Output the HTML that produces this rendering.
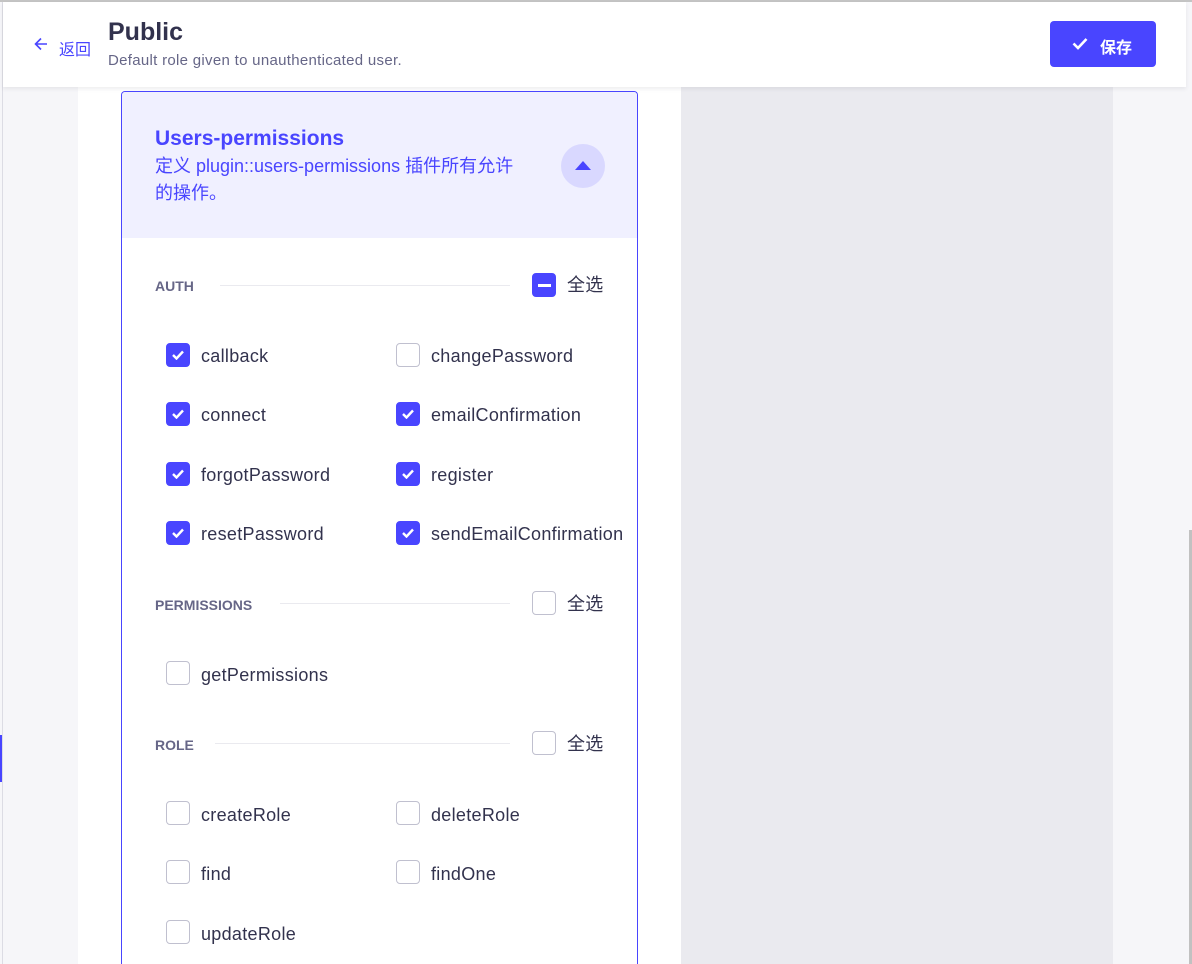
<!DOCTYPE html>
<html><head><meta charset="utf-8"><style>
*{margin:0;padding:0;box-sizing:border-box}
html,body{width:1192px;height:964px;overflow:hidden}
body{background:#f6f6f9;position:relative;font-family:"Liberation Sans","Noto Sans CJK SC",sans-serif;color:#32324d}
.a{position:absolute}
.cb{position:absolute;width:24px;height:24px;border-radius:4px;border:1px solid #c0c0cf;background:#fff}
.cb.on{background:#4945ff;border-color:#4945ff}
.cb.on svg{position:absolute;left:5px;top:6px}
.lb{position:absolute;font-size:18px;color:#32324d;line-height:24px;white-space:nowrap;letter-spacing:0.3px}
.sec{position:absolute;font-size:14px;font-weight:bold;color:#666687;line-height:16px}
.ln{position:absolute;height:1px;background:#eaeaef}
</style></head><body>
<div class="a" style="left:0;top:0;width:1192px;height:2px;background:#c4c4c4"></div>
<div class="a" style="left:2px;top:2px;width:1px;height:962px;background:#dcdce4"></div>
<div class="a" style="left:0;top:735px;width:2px;height:47px;background:#4945ff"></div>
<div class="a" style="left:78px;top:87px;width:603px;height:877px;background:#fff"></div>
<div class="a" style="left:681px;top:87px;width:432px;height:877px;background:#eaeaef"></div>
<div class="a" style="left:1189px;top:530px;width:3px;height:434px;background:#c1c1c1"></div>
<div class="a" style="left:3px;top:2px;width:1183px;height:85px;background:#fff;box-shadow:0 2px 4px rgba(33,33,52,.08)"></div>
<svg class="a" style="left:34px;top:37px" width="14" height="14" viewBox="0 0 14 14"><path d="M13 7H2M7 1.5L1.5 7L7 12.5" stroke="#4945ff" stroke-width="1.6" fill="none"/></svg>
<div class="a" style="left:59px;top:36px;font-size:16px;color:#4945ff">返回</div>
<div class="a" style="left:108px;top:18px;font-size:25px;font-weight:bold;color:#32324d">Public</div>
<div class="a" style="left:108px;top:52px;font-size:15px;color:#666687;letter-spacing:0.3px">Default role given to unauthenticated user.</div>
<div class="a" style="left:1050px;top:21px;width:106px;height:46px;background:#4945ff;border-radius:4px;color:#fff;font-size:16px;font-weight:bold">
<svg class="a" style="left:22px;top:16px" width="16" height="13" viewBox="0 0 16 13"><path d="M1.5 6.5L6 11L14.5 2" stroke="#fff" stroke-width="2.6" fill="none"/></svg>
<span class="a" style="left:50px;top:13px">保存</span></div>
<div class="a" style="left:121px;top:91px;width:517px;height:873px;border:1px solid #4945ff;border-bottom:none;border-radius:4px 4px 0 0;background:#fff;overflow:hidden">
<div class="a" style="left:0;top:0;width:515px;height:146px;background:#f0f0ff"></div>
</div>
<div class="a" style="left:155px;top:127px;font-size:21px;font-weight:bold;color:#4945ff">Users-permissions</div>
<div class="a" style="left:155px;top:153px;width:380px;font-size:18px;line-height:27px;color:#4945ff">定义 plugin::users-permissions 插件所有允许<br>的操作。</div>
<div class="a" style="left:561px;top:144px;width:44px;height:44px;border-radius:50%;background:#d9d8ff"></div>
<svg class="a" style="left:575px;top:160px" width="16" height="10" viewBox="0 0 16 10"><path d="M0 10L8 1L16 10Z" fill="#4945ff"/></svg>

<div class="sec" style="left:155px;top:278px">AUTH</div><div class="ln" style="left:220px;top:285px;width:290px"></div>
<div class="cb on" style="left:532px;top:273px"><span class="a" style="left:5px;top:10px;width:13px;height:3px;background:#fff"></span></div><div class="lb" style="left:567px;top:273px">全选</div>
<div class="sec" style="left:155px;top:597px">PERMISSIONS</div><div class="ln" style="left:280px;top:603px;width:230px"></div>
<div class="cb" style="left:532px;top:591px"></div><div class="lb" style="left:567px;top:592px">全选</div>
<div class="sec" style="left:155px;top:737px">ROLE</div><div class="ln" style="left:215px;top:743px;width:295px"></div>
<div class="cb" style="left:532px;top:731px"></div><div class="lb" style="left:567px;top:732px">全选</div>

<div class="cb on" style="left:166px;top:343px"><svg width="12" height="10" viewBox="0 0 12 10"><path d="M1 5L4.5 8.5L11 1.5" stroke="#fff" stroke-width="2.4" fill="none"/></svg></div><div class="lb" style="left:201px;top:344px">callback</div>
<div class="cb" style="left:396px;top:343px"></div><div class="lb" style="left:431px;top:344px">changePassword</div>
<div class="cb on" style="left:166px;top:402px"><svg width="12" height="10" viewBox="0 0 12 10"><path d="M1 5L4.5 8.5L11 1.5" stroke="#fff" stroke-width="2.4" fill="none"/></svg></div><div class="lb" style="left:201px;top:403px">connect</div>
<div class="cb on" style="left:396px;top:402px"><svg width="12" height="10" viewBox="0 0 12 10"><path d="M1 5L4.5 8.5L11 1.5" stroke="#fff" stroke-width="2.4" fill="none"/></svg></div><div class="lb" style="left:431px;top:403px">emailConfirmation</div>
<div class="cb on" style="left:166px;top:462px"><svg width="12" height="10" viewBox="0 0 12 10"><path d="M1 5L4.5 8.5L11 1.5" stroke="#fff" stroke-width="2.4" fill="none"/></svg></div><div class="lb" style="left:201px;top:463px">forgotPassword</div>
<div class="cb on" style="left:396px;top:462px"><svg width="12" height="10" viewBox="0 0 12 10"><path d="M1 5L4.5 8.5L11 1.5" stroke="#fff" stroke-width="2.4" fill="none"/></svg></div><div class="lb" style="left:431px;top:463px">register</div>
<div class="cb on" style="left:166px;top:521px"><svg width="12" height="10" viewBox="0 0 12 10"><path d="M1 5L4.5 8.5L11 1.5" stroke="#fff" stroke-width="2.4" fill="none"/></svg></div><div class="lb" style="left:201px;top:522px">resetPassword</div>
<div class="cb on" style="left:396px;top:521px"><svg width="12" height="10" viewBox="0 0 12 10"><path d="M1 5L4.5 8.5L11 1.5" stroke="#fff" stroke-width="2.4" fill="none"/></svg></div><div class="lb" style="left:431px;top:522px">sendEmailConfirmation</div>

<div class="cb" style="left:166px;top:661px"></div><div class="lb" style="left:201px;top:663px">getPermissions</div>

<div class="cb" style="left:166px;top:801px"></div><div class="lb" style="left:201px;top:803px">createRole</div>
<div class="cb" style="left:396px;top:801px"></div><div class="lb" style="left:431px;top:803px">deleteRole</div>
<div class="cb" style="left:166px;top:860px"></div><div class="lb" style="left:201px;top:862px">find</div>
<div class="cb" style="left:396px;top:860px"></div><div class="lb" style="left:431px;top:862px">findOne</div>
<div class="cb" style="left:166px;top:920px"></div><div class="lb" style="left:201px;top:922px">updateRole</div>
</body></html>
